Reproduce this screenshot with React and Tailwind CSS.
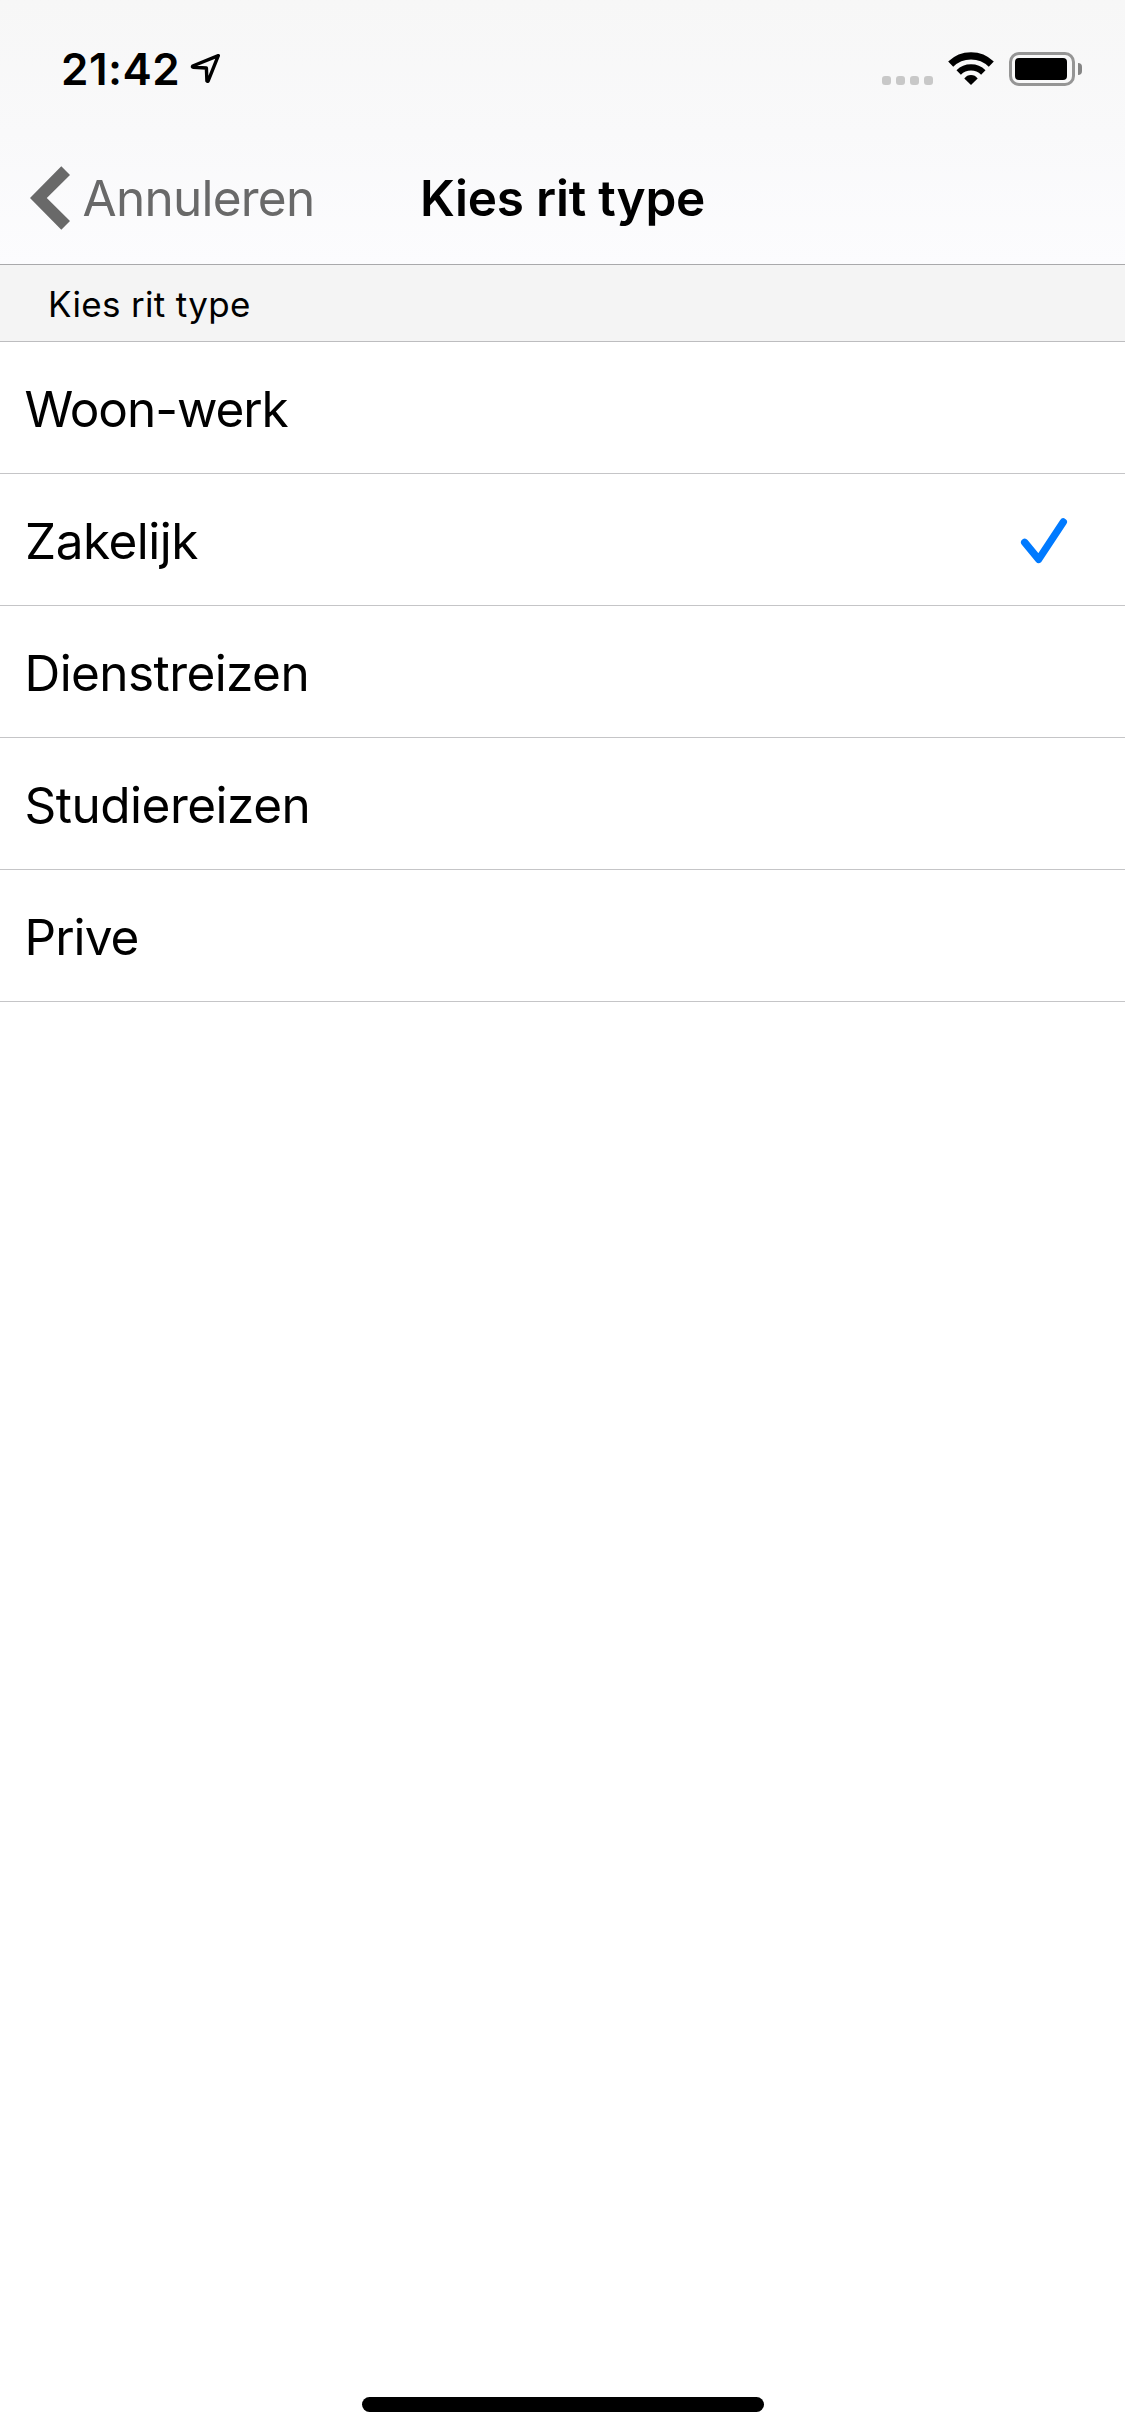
const options = [
  { label: "Woon-werk", className: "tracking-[-1.05px] pl-[24.5px]" },
  { label: "Zakelijk", className: "tracking-[-0.5px] pl-[25px]", selected: true },
  { label: "Dienstreizen", className: "tracking-[-0.58px] pl-[24.5px]" },
  { label: "Studiereizen", className: "tracking-[-0.5px] pl-[24.5px]" },
  { label: "Prive", className: "tracking-[-0.95px] pl-[24.5px]" },
];

function LocationArrow() {
  return (
    <svg className="ml-[10px] mt-[6px] h-[30px] w-[30px]" viewBox="190 53 30 30" fill="none" stroke="#000" strokeWidth="3.4" strokeLinejoin="round">
      <path d="M218.3 55.7 L192.7 66 Q192 67.2 193.2 67.2 L206.4 68 L206.9 81 Q207.6 81.8 208.2 80.8 Z" />
    </svg>
  );
}

function SignalDots() {
  return (
    <div className="mt-[24px] flex gap-[5px]">
      {[0, 1, 2, 3].map((i) => (
        <span key={i} className="size-[9px] rounded-[3px] bg-[#c8c8c8]" />
      ))}
    </div>
  );
}

function Wifi() {
  return (
    <svg className="ml-[15px] h-[34px] w-[46px]" viewBox="0 0 46 34" fill="none" stroke="#000">
      <path d="M2.7 12.1 A29 29 0 0 1 43.3 12.1" strokeWidth="7.2" />
      <path d="M10.7 20.4 A17.6 17.6 0 0 1 35.3 20.4" strokeWidth="6.3" />
      <path d="M23 33 L16.3 26.4 Q19 23 23 23 Q27 23 29.7 26.4 Z" fill="#000" stroke="none" />
    </svg>
  );
}

function Battery() {
  return (
    <div className="ml-[15px] flex items-center">
      <div className="h-[34px] w-[66px] rounded-[10px] border-3 border-[#959595] p-[3px]">
        <div className="h-full w-[52px] rounded-[4px] bg-black" />
      </div>
      <div className="ml-[3px] h-3 w-1 rounded-r-full bg-[#858585]" />
    </div>
  );
}

export default function App() {
  return (
    <div className="flex h-[2436px] w-[1125px] flex-col bg-white font-[Inter,sans-serif] text-black">
      <header className="h-[265px] border-b border-[#a9a9ab] bg-linear-to-b from-[#f7f7f7] via-[#f9f9fa] to-[#fcfcfe]">
        <div className="flex h-[132px] items-start justify-between pl-[61px] pr-[43px]">
          <div className="flex pt-[47px]">
            <span className="text-[44px] leading-[44px] font-semibold tracking-[0.5px]">21:42</span>
            <LocationArrow />
          </div>
          <div className="flex items-start pt-[52px]">
            <SignalDots />
            <Wifi />
            <Battery />
          </div>
        </div>
        <nav className="grid h-[132px] grid-cols-[420px_1fr] items-center">
          <button className="flex items-center pl-[30px] text-[#696969]">
            <svg className="h-[64px] w-[40px]" viewBox="0 0 40 64" fill="#696969">
              <path d="M0 32 L31.3 0.3 L40 9 L16.8 32 L40 55 L31.3 63.7 Z" />
            </svg>
            <span className="ml-[12.5px] text-[49.5px] leading-[60px] tracking-[-0.75px]">Annuleren</span>
          </button>
          <h1 className="text-[49.5px] leading-[60px] font-semibold tracking-[-0.22px]">Kies rit type</h1>
        </nav>
      </header>
      <h2 className="flex h-[77px] items-center border-b border-[#bdbdbf] bg-[#f4f4f4] pt-[2px] pl-[48px] text-[35px] tracking-[0.33px]">
        Kies rit type
      </h2>
      <ul>
        {options.map(({ label, className, selected }) => (
          <li key={label} className="flex h-[132px] items-center justify-between border-b border-[#c5c5c7] pr-[57px]">
            <span className={`pt-[2px] text-[49.5px] leading-[60px] ${className}`}>{label}</span>
            {selected && (
              <svg className="mt-[2px] h-[46px] w-[48px]" viewBox="0 0 48 46" fill="none" stroke="#007aff" strokeWidth="7.4" strokeLinecap="round" strokeLinejoin="round">
                <path d="M4.7 24.3 L18.7 41.3 L43.3 4" />
              </svg>
            )}
          </li>
        ))}
      </ul>
      <div className="mt-auto mb-6 ml-[362px] h-[15px] w-[402px] rounded-full bg-black" />
    </div>
  );
}
